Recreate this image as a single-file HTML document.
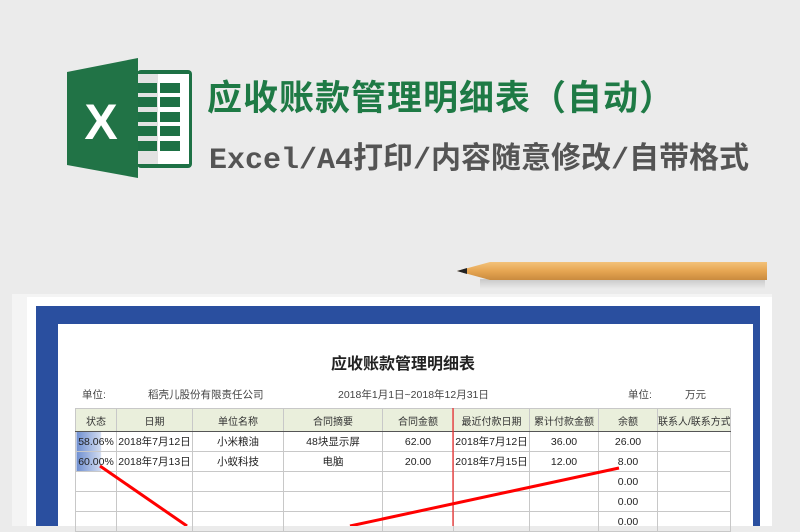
<!DOCTYPE html>
<html><head><meta charset="utf-8"><style>
*{margin:0;padding:0;box-sizing:border-box}
body{width:800px;height:526px;overflow:hidden;background:#ebebeb;position:relative;font-family:"Liberation Sans","Noto Sans CJK SC",sans-serif}
.abs{position:absolute}
.t1{left:207px;top:70px;font-size:35px;font-weight:bold;color:#1e7a45;white-space:nowrap;letter-spacing:1px}
.t2{left:209px;top:133px;font-size:30px;font-weight:bold;color:#545454;white-space:nowrap;font-family:"Liberation Mono","Noto Sans CJK SC",monospace;letter-spacing:0}
table{border-collapse:collapse;position:absolute;left:75px;top:408px;width:655px;font-size:10.5px;color:#222;table-layout:fixed}
td{border:1px solid #c8c8c8;height:20px;text-align:center;white-space:nowrap;overflow:hidden;padding:0}
tr.h td{background:#eaefdc;height:23px;border-bottom:1.5px solid #555;font-size:10px;color:#333}
</style></head><body>
<svg class="abs" style="left:0;top:0" width="800" height="526">
<rect x="137" y="70" width="55" height="98" rx="4" fill="#1e7145"/>
<rect x="140" y="74" width="49" height="90" fill="#fff"/>
<rect x="138" y="74" width="20" height="90" fill="#e2e2e2"/>
<g fill="#1e7145">
<rect x="138" y="83" width="19" height="10"/><rect x="160" y="83" width="20" height="10"/>
<rect x="138" y="97" width="19" height="10"/><rect x="160" y="97" width="20" height="10"/>
<rect x="138" y="112" width="19" height="10"/><rect x="160" y="112" width="20" height="10"/>
<rect x="138" y="126" width="19" height="10"/><rect x="160" y="126" width="20" height="10"/>
<rect x="138" y="141" width="19" height="10"/><rect x="160" y="141" width="20" height="10"/>
</g>
<polygon points="67,72 138,58 138,178 67,165" fill="#217346"/>
<text x="101" y="139" font-size="50" font-weight="bold" fill="#fff" text-anchor="middle" font-family="Liberation Sans">X</text>
<defs><linearGradient id="pg" x1="0" y1="0" x2="0" y2="1"><stop offset="0" stop-color="#f3c27a"/><stop offset="0.5" stop-color="#e6a552"/><stop offset="1" stop-color="#c98a3e"/></linearGradient>
<linearGradient id="sh" x1="0" y1="0" x2="0" y2="1"><stop offset="0" stop-color="#000" stop-opacity="0.15"/><stop offset="1" stop-color="#000" stop-opacity="0"/></linearGradient></defs>
<rect x="480" y="279" width="285" height="10" fill="url(#sh)"/>
<polygon points="457,271 490,262 767,262 767,280 490,280" fill="url(#pg)"/>
<polygon points="457,271 467,268 467,274" fill="#222"/>
<rect x="12" y="294" width="760" height="240" fill="#f4f4f4"/>
<rect x="27" y="297" width="745" height="240" fill="#fff"/>
<rect x="36" y="306" width="724" height="230" fill="#2a4f9f"/>
<rect x="58" y="324" width="695" height="210" fill="#fff"/>
</svg>
<div class="abs t1">应收账款管理明细表（自动）</div>
<div class="abs t2">Excel/A4打印/内容随意修改/自带格式</div>
<div class="abs" style="left:300px;top:350px;width:206px;text-align:center;font-size:16px;font-weight:bold;color:#222">应收账款管理明细表</div>
<div class="abs" style="left:82px;top:387px;font-size:10.5px;color:#444">单位:</div>
<div class="abs" style="left:148px;top:387px;font-size:10.5px;color:#444">稻壳儿股份有限责任公司</div>
<div class="abs" style="left:338px;top:387px;font-size:10.5px;color:#444">2018年1月1日~2018年12月31日</div>
<div class="abs" style="left:628px;top:387px;font-size:10.5px;color:#444">单位:</div>
<div class="abs" style="left:685px;top:387px;font-size:10.5px;color:#444">万元</div>
<table style="border:1.5px solid #555">
<colgroup><col style="width:41px"><col style="width:76px"><col style="width:91px"><col style="width:99px"><col style="width:71px"><col style="width:76px"><col style="width:69px"><col style="width:59px"><col style="width:73px"></colgroup>
<tr class="h"><td>状态</td><td>日期</td><td>单位名称</td><td>合同摘要</td><td>合同金额</td><td>最近付款日期</td><td>累计付款金额</td><td>余额</td><td>联系人/联系方式</td></tr>
<tr><td style="background:linear-gradient(90deg,#6f8fd0 0,#cfdaf0 24px,#fff 25px)">58.06%</td><td>2018年7月12日</td><td>小米粮油</td><td>48块显示屏</td><td>62.00</td><td>2018年7月12日</td><td>36.00</td><td>26.00</td><td></td></tr>
<tr><td style="background:linear-gradient(90deg,#6f8fd0 0,#cfdaf0 24px,#fff 25px)">60.00%</td><td>2018年7月13日</td><td>小蚁科技</td><td>电脑</td><td>20.00</td><td>2018年7月15日</td><td>12.00</td><td>8.00</td><td></td></tr>
<tr><td></td><td></td><td></td><td></td><td></td><td></td><td></td><td>0.00</td><td></td></tr>
<tr><td></td><td></td><td></td><td></td><td></td><td></td><td></td><td>0.00</td><td></td></tr>
<tr><td></td><td></td><td></td><td></td><td></td><td></td><td></td><td>0.00</td><td></td></tr>
</table>
<svg class="abs" style="left:0;top:0" width="800" height="526">
<line x1="453" y1="408" x2="453" y2="526" stroke="#e33" stroke-width="1.3"/>
<line x1="100" y1="466" x2="187" y2="526" stroke="#f00" stroke-width="3"/>
<line x1="619" y1="468" x2="350" y2="526" stroke="#f00" stroke-width="3"/>
</svg>
</body></html>
